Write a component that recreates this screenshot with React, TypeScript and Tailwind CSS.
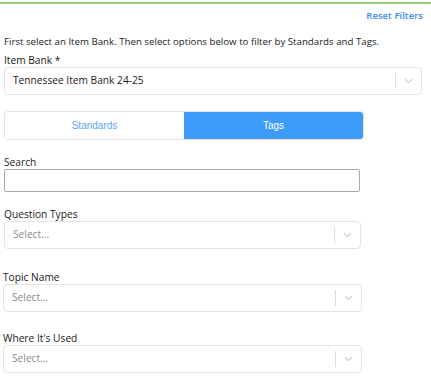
import React from "react";

function Chevron() {
  return (
    <svg width="9" height="6" viewBox="0 0 9 6" fill="none">
      <path d="M1 1.2 L4.5 4.6 L8 1.2" stroke="#c8c8c8" strokeWidth="1.1" />
    </svg>
  );
}

function Select({ value, width, placeholder }: { value?: string; width: string; placeholder?: string }) {
  return (
    <div className={`${width} h-[28px] mt-px rounded-[4px] border border-[#e4e4e4] bg-white flex items-center`}>
      <div className={`flex-1 pl-[8px] text-[10.2px] ${value ? "text-[#222]" : "text-[#8a8a8a]"}`}>
        {value ?? placeholder}
      </div>
      <div className="w-px h-[16px] bg-[#dcdcdc]" />
      <div className="w-[25px] flex items-center justify-center">
        <Chevron />
      </div>
    </div>
  );
}

function Label({ children, className }: { children: React.ReactNode; className?: string }) {
  return <div className={`text-[10.2px] leading-[12px] font-medium text-[#1a1a1a] ${className ?? ""}`}>{children}</div>;
}

export default function App() {
  return (
    <div className="w-[431px] h-[388px] bg-white font-['Open_Sans',sans-serif] text-[#1a1a1a]">
      <div className="pt-[2px]">
        <div className="h-[2px] bg-[#9fcd74]" />
      </div>
      <div className="h-[24px] flex items-center justify-end pr-[8px]">
        <span className="text-[9.6px] font-semibold text-[#3b8ff0]">Reset Filters</span>
      </div>
      <div className="px-[4px]">
        <div className="mt-[7px] text-[9.7px] leading-[14px] text-[#222]">
          First select an Item Bank. Then select options below to filter by Standards and Tags.
        </div>
        <Label className="mt-[5px]">Item Bank *</Label>
        <Select width="w-[418px]" value="Tennessee Item Bank 24-25" />

        <div className="mt-[16px] w-[360px] h-[29px] rounded-[4px] border border-[#e2e2e2] flex overflow-hidden font-['Liberation_Sans',sans-serif] text-[10px]">
          <div className="flex-1 flex items-center justify-center bg-white text-[#5aa8f8]">Standards</div>
          <div className="flex-1 flex items-center justify-center bg-[#3d9bf9] text-white">Tags</div>
        </div>

        <Label className="mt-[16px]">Search</Label>
        <div className="mt-px w-[356px] h-[23px] rounded-[2px] border border-[#a9a9a9] bg-white" />

        <Label className="mt-[16px]">Question Types</Label>
        <Select width="w-[357px]" placeholder="Select..." />

        <Label className="mt-[22px] -ml-px">Topic Name</Label>
        <div className="-ml-px">
          <Select width="w-[359px]" placeholder="Select..." />
        </div>

        <Label className="mt-[20px] -ml-px">Where It's Used</Label>
        <div className="-ml-px">
          <Select width="w-[359px]" placeholder="Select..." />
        </div>
      </div>
    </div>
  );
}
